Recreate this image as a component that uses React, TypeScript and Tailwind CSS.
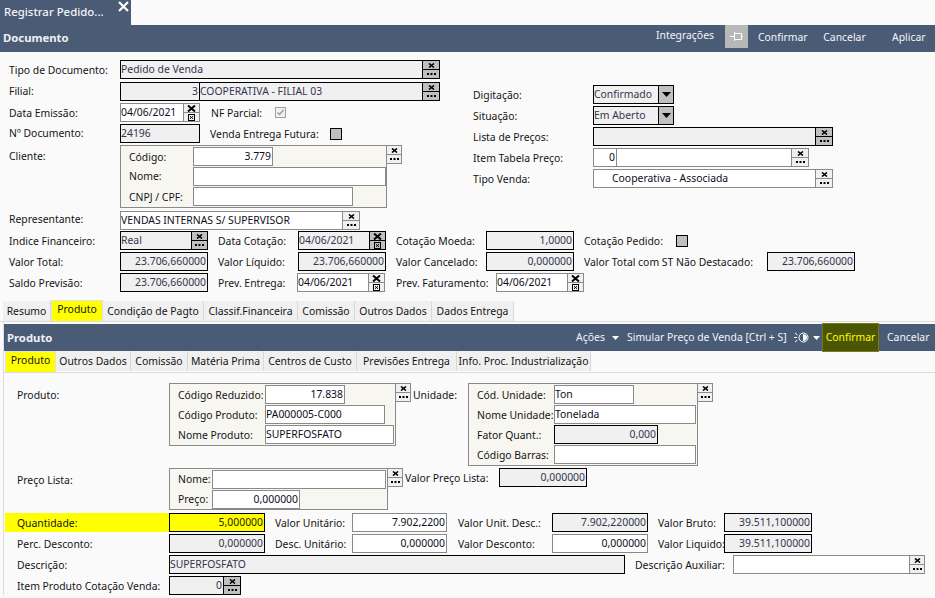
import React from "react";

const DARK = "border-black bg-[#f0f0f0] text-[#34344e]";
const LIGHT = "border-[#8a8a8a] bg-white text-[#0c0c20]";

function Input({ w, v = "", right = false, dark = false, cls = "" }: { w: string; v?: string; right?: boolean; dark?: boolean; cls?: string }) {
  return (
    <div className={`${w} h-[19px] flex-none flex items-center border overflow-hidden whitespace-nowrap pr-px leading-none ${right ? "justify-end" : ""} ${dark ? DARK : LIGHT} ${cls}`}>
      <span className="-mt-px">{v}</span>
    </div>
  );
}

function Cross({ bold = false }: { bold?: boolean }) {
  return (
    <svg width={bold ? 9 : 7} height={bold ? 7 : 5} viewBox={bold ? "0 0 9 7" : "0 0 7 5"} fill="none" stroke="#000" strokeWidth={bold ? 2 : 1.6}>
      <path d={bold ? "M1 0.5L8 6.5M8 0.5L1 6.5" : "M1 0.5L6 4.5M6 0.5L1 4.5"} />
    </svg>
  );
}

function Dots() {
  return (
    <svg width="9" height="3" viewBox="0 0 9 3" fill="#000">
      <rect x="0" y="0" width="2" height="2" />
      <rect x="3.5" y="0" width="2" height="2" />
      <rect x="7" y="0" width="2" height="2" />
    </svg>
  );
}

function Cal() {
  return (
    <svg width="7" height="7" viewBox="0 0 7 7" fill="none" stroke="#000" strokeWidth="1">
      <rect x="0.5" y="0.5" width="6" height="6" />
      <path d="M2 2.2L5 4.8M5 2.2L2 4.8" />
    </svg>
  );
}

function Btns({ w = "w-[18px]", dark = false, date = false }: { w?: string; dark?: boolean; date?: boolean }) {
  const cell = `flex-1 flex items-center justify-center ${dark ? "bg-[#c0c0c0] border-black" : "bg-[#f0f0f0] border-[#8a8a8a]"}`;
  return (
    <div className={`${w} h-[19px] flex-none flex flex-col border -ml-px ${dark ? "border-black" : "border-[#8a8a8a]"}`}>
      <div className={`${cell} border-b`}>
        <Cross bold={date} />
      </div>
      <div className={cell}>{date ? <Cal /> : <Dots />}</div>
    </div>
  );
}

function Label({ w, t, cls = "" }: { w: string; t: string; cls?: string }) {
  return (
    <div className={`${w} flex-none whitespace-nowrap ${cls}`}>
      <div className="pt-[2px]">{t}</div>
    </div>
  );
}

function Row({ mt = "", cls = "", children }: { mt?: string; cls?: string; children: React.ReactNode }) {
  return <div className={`flex items-center h-[19px] ${mt} ${cls}`}>{children}</div>;
}

function Box({ w, h, children }: { w: string; h: string; children: React.ReactNode }) {
  return (
    <div className={`${w} ${h} flex-none flex flex-col gap-px border border-[#8a8a8a] bg-[#f7f6f1] pt-px pl-2`}>{children}</div>
  );
}

function Tab({ w, t, active = false }: { w: string; t: string; active?: boolean }) {
  return (
    <div
      className={`${w} flex-none flex items-center justify-center whitespace-nowrap ${
        active ? "bg-[#ffff00] h-[21px] self-end border border-[#e0e0e0] border-b-0 pb-[3px]" : "bg-[#f0f0f0] h-[20px] border-r border-[#d8d8d8]"
      }`}
    >
      {t}
    </div>
  );
}

function Check({ on = false }: { on?: boolean }) {
  return on ? (
    <svg width="11" height="11" viewBox="0 0 11 11" className="flex-none">
      <rect x="0.5" y="0.5" width="10" height="10" fill="#f2f2f2" stroke="#a0a0a0" />
      <path d="M2.5 5.5L4.5 7.5L8.5 3" fill="none" stroke="#9a9a9a" strokeWidth="1.5" />
    </svg>
  ) : (
    <div className="w-[12px] h-[12px] flex-none bg-[#c0c0c0] border border-black" />
  );
}

function Caret({ cls = "" }: { cls?: string }) {
  return (
    <svg width="7" height="4" viewBox="0 0 7 4" className={`flex-none ${cls}`} fill="#fff">
      <path d="M0 0H7L3.5 4Z" />
    </svg>
  );
}

function Select({ v }: { v: string }) {
  return (
    <div className="flex flex-none">
      <Input w="w-[66px]" v={v} dark />
      <div className="w-[16px] h-[19px] -ml-px flex-none flex items-center justify-center border border-black bg-[#c0c0c0]">
        <svg width="9" height="5" viewBox="0 0 9 5" fill="#000">
          <path d="M0 0H9L4.5 5Z" />
        </svg>
      </div>
    </div>
  );
}

export default function App() {
  return (
    <div className="w-[935px] h-[598px] overflow-hidden bg-[#fafafa] text-[10.4px] leading-none text-[#141414] font-[Noto_Sans,sans-serif]">
      {/* window tab */}
      <div className="w-[131px] h-[25px] bg-[#4a5b76] text-[#f2f4f8] text-[11.4px] flex items-start relative">
        <span className="pl-[4px] pt-[6px] font-medium whitespace-nowrap">Registrar Pedido...</span>
        <svg width="11" height="11" viewBox="0 0 11 11" className="absolute left-[118px] top-[1px]" stroke="#fff" strokeWidth="2.2">
          <path d="M1 1L10 10M10 1L1 10" />
        </svg>
      </div>

      {/* Documento bar */}
      <div className="h-[27px] bg-[#4a5b76] flex items-start text-[#f4f6fa]">
        <div className="pl-[3px] pt-[7px] text-[11.3px] font-bold text-[#eef1f5]">Documento</div>
        <div className="ml-auto w-[56px] pt-[5px] whitespace-nowrap text-center">Integrações</div>
        <div className="ml-[13px] w-[23px] h-[23px] bg-[#b8b8b8] flex items-center justify-center">
          <svg width="13" height="9" viewBox="0 0 13 9" fill="none" stroke="#fff" strokeWidth="1">
            <path d="M0 4.5H4.5M4.5 1.5H11.5V7.5H4.5V1.5M4.5 0V9M11.5 4.5H13" />
          </svg>
        </div>
        <div className="ml-[10px] w-[45px] pt-[7px] text-center">Confirmar</div>
        <div className="ml-[20px] w-[43px] pt-[7px] text-center">Cancelar</div>
        <div className="ml-[26px] mr-[10px] w-[33px] pt-[7px] text-center">Aplicar</div>
      </div>

      {/* upper form */}
      <div className="flex pt-[8px]">
        <div className="w-[473px] flex-none pl-[9px]">
          <Row>
            <Label w="w-[111px]" t="Tipo de Documento:" />
            <Input w="w-[303px]" v="Pedido de Venda" dark />
            <Btns dark />
          </Row>
          <Row mt="mt-[3px]">
            <Label w="w-[111px]" t="Filial:" cls="-mt-[2px]" />
            <Input w="w-[80px]" v="3" right dark />
            <Input w="w-[224px]" v="COOPERATIVA - FILIAL 03" dark cls="-ml-px" />
            <Btns dark />
          </Row>
          <Row mt="mt-[2px]">
            <Label w="w-[111px]" t="Data Emissão:" />
            <Input w="w-[64px]" v="04/06/2021" />
            <Btns date w="w-[17px]" />
            <Label w="w-[64px]" t="NF Parcial:" cls="ml-[11px]" />
            <Check on />
          </Row>
          <Row mt="mt-[2px]">
            <Label w="w-[111px]" t="Nº Documento:" cls="-mt-[2px]" />
            <Input w="w-[80px]" v="24196" dark />
            <Label w="w-[120px]" t="Venda Entrega Futura:" cls="ml-[10px]" />
            <Check />
          </Row>
          <div className="flex items-start mt-[2px]">
            <Label w="w-[111px]" t="Cliente:" cls="pt-[4px]" />
            <Box w="w-[267px]" h="h-[63px]">
              <Row>
                <Label w="w-[64px]" t="Código:" />
                <Input w="w-[80px]" v="3.779" right />
              </Row>
              <Row>
                <Label w="w-[64px]" t="Nome:" cls="-mt-[2px]" />
                <Input w="w-[193px]" />
              </Row>
              <Row>
                <Label w="w-[64px]" t="CNPJ / CPF:" />
                <Input w="w-[160px]" />
              </Row>
            </Box>
            <Btns w="w-[16px]" />
          </div>
          <Row mt="mt-[3px]">
            <Label w="w-[111px]" t="Representante:" cls="-mt-[4px]" />
            <Input w="w-[223px]" v="VENDAS INTERNAS S/ SUPERVISOR" />
            <Btns />
          </Row>
        </div>

        <div className="pt-[25px]">
          <Row>
            <Label w="w-[120px]" t="Digitação:" />
            <Select v="Confirmado" />
          </Row>
          <Row mt="mt-[2px]">
            <Label w="w-[120px]" t="Situação:" />
            <Select v="Em Aberto" />
          </Row>
          <Row mt="mt-[2px]">
            <Label w="w-[120px]" t="Lista de Preços:" />
            <Input w="w-[223px]" dark />
            <Btns dark />
          </Row>
          <Row mt="mt-[2px]">
            <Label w="w-[120px]" t="Item Tabela Preço:" />
            <Input w="w-[24px]" v="0" right />
            <Input w="w-[176px]" cls="-ml-px" />
            <Btns />
          </Row>
          <Row mt="mt-[2px]">
            <Label w="w-[120px]" t="Tipo Venda:" />
            <Input w="w-[223px]" v="Cooperativa - Associada" cls="pl-[18px]" />
            <Btns />
          </Row>
        </div>
      </div>

      {/* totals */}
      <div className="pl-[9px]">
        <Row mt="mt-px">
          <Label w="w-[111px]" t="Indice Financeiro:" />
          <Input w="w-[72px]" v="Real" dark />
          <Btns dark w="w-[17px]" />
          <Label w="w-[80px]" t="Data Cotação:" cls="ml-[10px]" />
          <Input w="w-[72px]" v="04/06/2021" dark />
          <Btns dark date w="w-[17px]" />
          <Label w="w-[90px]" t="Cotação Moeda:" cls="ml-[10px]" />
          <Input w="w-[88px]" v="1,0000" right dark />
          <Label w="w-[92px]" t="Cotação Pedido:" cls="ml-[10px]" />
          <Check />
        </Row>
        <Row mt="mt-[2px]">
          <Label w="w-[111px]" t="Valor Total:" />
          <Input w="w-[88px]" v="23.706,660000" right dark />
          <Label w="w-[80px]" t="Valor Líquido:" cls="ml-[10px]" />
          <Input w="w-[88px]" v="23.706,660000" right dark />
          <Label w="w-[90px]" t="Valor Cancelado:" cls="ml-[10px]" />
          <Input w="w-[88px]" v="0,000000" right dark />
          <Label w="w-[183px]" t="Valor Total com ST Não Destacado:" cls="ml-[10px]" />
          <Input w="w-[88px]" v="23.706,660000" right dark />
        </Row>
        <Row mt="mt-[2px]">
          <Label w="w-[111px]" t="Saldo Previsão:" />
          <Input w="w-[88px]" v="23.706,660000" right dark />
          <Label w="w-[79px]" t="Prev. Entrega:" cls="ml-[10px]" />
          <Input w="w-[72px]" v="04/06/2021" />
          <Btns date w="w-[17px]" />
          <Label w="w-[100px]" t="Prev. Faturamento:" cls="ml-[11px]" />
          <Input w="w-[72px]" v="04/06/2021" />
          <Btns date w="w-[17px]" />
        </Row>
      </div>

      {/* outer tabs */}
      <div className="mt-[8px] h-[22px] flex items-end pl-[3px] border-b border-[#dcdcdc]">
        <Tab w="w-[48px]" t="Resumo" />
        <Tab w="w-[52px]" t="Produto" active />
        <Tab w="w-[101px]" t="Condição de Pagto" />
        <Tab w="w-[94px]" t="Classif.Financeira" />
        <Tab w="w-[57px]" t="Comissão" />
        <Tab w="w-[77px]" t="Outros Dados" />
        <Tab w="w-[82px]" t="Dados Entrega" />
      </div>

      {/* panel */}
      <div className="ml-[3px] border-l border-[#dcdcdc] pt-[2px]">
        <div className="h-[27px] bg-[#4a5b76] flex items-center text-[#f4f6fa]">
          <div className="pl-[3px] text-[11.3px] font-bold text-[#eef1f5]">Produto</div>
          <div className="ml-auto w-[31px] text-center whitespace-nowrap">Ações</div>
          <Caret cls="ml-[6px]" />
          <div className="ml-[8px] w-[157px] text-center whitespace-nowrap">Simular Preço de Venda [Ctrl + S]</div>
          <svg width="15" height="13" viewBox="0 0 15 13" className="ml-[10px] flex-none" fill="none" stroke="#fff" strokeWidth="1">
            <path d="M0 6.5H3M1 2L3.5 4M1 11L3.5 9" />
            <circle cx="9.5" cy="6.5" r="4.5" />
            <path d="M9.5 3.5A3 3 0 0 1 9.5 9.5Z" fill="#fff" />
          </svg>
          <Caret cls="ml-[4px]" />
          <div className="ml-[2px] -my-px w-[57px] h-[29px] flex-none flex items-center justify-center bg-[#4a5506] border border-[#777d10] text-[#ffff00]">
            Confirmar
          </div>
          <div className="ml-[8px] mr-[6px] w-[42px] text-center">Cancelar</div>
        </div>

        {/* inner tabs */}
        <div className="h-[22px] flex items-start pl-px border-b border-[#dcdcdc]">
          <Tab w="w-[51px]" t="Produto" active />
          <Tab w="w-[75px]" t="Outros Dados" />
          <Tab w="w-[57px]" t="Comissão" />
          <Tab w="w-[76px]" t="Matéria Prima" />
          <Tab w="w-[93px]" t="Centros de Custo" />
          <Tab w="w-[100px]" t="Previsões Entrega" />
          <Tab w="w-[134px]" t="Info. Proc. Industrialização" />
        </div>

        {/* panel form */}
        <div className="pl-px pt-[10px]">
          <div className="flex items-start">
            <Label w="w-[164px]" t="Produto:" cls="pl-[12px] pt-[5px]" />
            <Box w="w-[227px]" h="h-[63px]">
              <Row>
                <Label w="w-[87px]" t="Código Reduzido:" />
                <Input w="w-[80px]" v="17.838" right />
              </Row>
              <Row>
                <Label w="w-[87px]" t="Código Produto:" />
                <Input w="w-[120px]" v="PA000005-C000" />
              </Row>
              <Row>
                <Label w="w-[87px]" t="Nome Produto:" />
                <Input w="w-[129px]" v="SUPERFOSFATO" />
              </Row>
            </Box>
            <Btns w="w-[16px]" />
            <Label w="w-[55px]" t="Unidade:" cls="ml-[2px] pt-[5px]" />
            <Box w="w-[230px]" h="h-[83px]">
              <Row>
                <Label w="w-[77px]" t="Cód. Unidade:" />
                <Input w="w-[80px]" v="Ton" />
              </Row>
              <Row>
                <Label w="w-[77px]" t="Nome Unidade:" />
                <Input w="w-[142px]" v="Tonelada" />
              </Row>
              <Row>
                <Label w="w-[77px]" t="Fator Quant.:" />
                <Input w="w-[104px]" v="0,000" right dark />
              </Row>
              <Row>
                <Label w="w-[77px]" t="Código Barras:" />
                <Input w="w-[142px]" />
              </Row>
            </Box>
            <Btns w="w-[16px]" />
          </div>

          <div className="flex items-start mt-[2px]">
            <Label w="w-[164px]" t="Preço Lista:" cls="pl-[12px] pt-[5px]" />
            <Box w="w-[219px]" h="h-[42px]">
              <Row>
                <Label w="w-[34px]" t="Nome:" cls="-mt-[2px]" />
                <Input w="w-[174px]" />
              </Row>
              <Row>
                <Label w="w-[34px]" t="Preço:" cls="-mt-[2px]" />
                <Input w="w-[88px]" v="0,000000" right />
              </Row>
            </Box>
            <Btns w="w-[16px]" />
            <Label w="w-[94px]" t="Valor Preço Lista:" cls="ml-[2px] pt-[3px]" />
            <Input w="w-[88px]" v="0,000000" right dark />
          </div>

          <Row mt="mt-[3px]">
            <Label w="w-[164px]" t="Quantidade:" cls="h-[19px] flex items-center bg-[#ffff00] pl-[12px]" />
            <Input w="w-[96px]" v="5,000000" right cls="!border-black !bg-[#ffff00] !text-[#222200]" />
            <Label w="w-[77px]" t="Valor Unitário:" cls="ml-[10px]" />
            <Input w="w-[95px]" v="7.902,2200" right />
            <Label w="w-[94px]" t="Valor Unit. Desc.:" cls="ml-[11px]" />
            <Input w="w-[96px]" v="7.902,220000" right dark />
            <Label w="w-[66px]" t="Valor Bruto:" cls="ml-[10px]" />
            <Input w="w-[88px]" v="39.511,100000" right dark />
          </Row>
          <Row mt="mt-[2px]">
            <Label w="w-[164px]" t="Perc. Desconto:" cls="pl-[12px]" />
            <Input w="w-[96px]" v="0,000000" right dark />
            <Label w="w-[77px]" t="Desc. Unitário:" cls="ml-[10px]" />
            <Input w="w-[95px]" v="0,000000" right />
            <Label w="w-[94px]" t="Valor Desconto:" cls="ml-[11px]" />
            <Input w="w-[96px]" v="0,000000" right />
            <Label w="w-[66px]" t="Valor Liquido:" cls="ml-[10px]" />
            <Input w="w-[88px]" v="39.511,100000" right dark />
          </Row>
          <Row mt="mt-[2px]">
            <Label w="w-[164px]" t="Descrição:" cls="pl-[12px]" />
            <Input w="w-[456px]" v="SUPERFOSFATO" dark />
            <Label w="w-[98px]" t="Descrição Auxiliar:" cls="ml-[10px]" />
            <Input w="w-[177px]" />
            <Btns w="w-[16px]" />
          </Row>
          <Row mt="mt-[2px]">
            <Label w="w-[164px]" t="Item Produto Cotação Venda:" cls="pl-[12px]" />
            <Input w="w-[55px]" v="0" right dark />
            <Btns dark />
          </Row>
        </div>
      </div>
    </div>
  );
}
